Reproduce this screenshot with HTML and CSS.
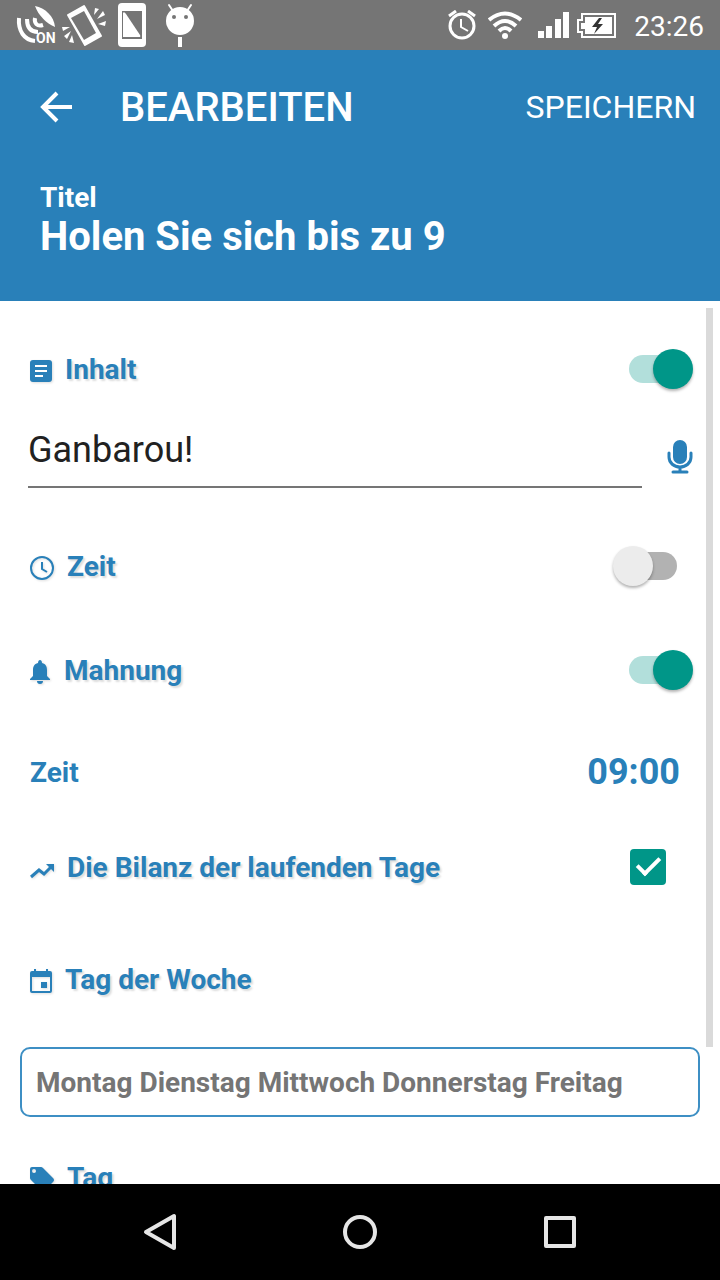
FILE: index.html
```
<!DOCTYPE html>
<html lang="de">

<head>
    <meta charset="UTF-8">
    <meta name="viewport" content="width=device-width, initial-scale=1.0">
    <title>Bearbeiten</title>
    <link rel="stylesheet" href="styles.css">
</head>

<body>
    <div class="status">
        <div class="status-left">
            <svg class="nfc" width="42" height="44" viewBox="0 0 42 44">
                <path d="M19 3C29 5 38 13 39 24C31 21 22 12 19 3Z" fill="#fff"/>
                <g fill="none" stroke="#fff" stroke-width="4">
                    <path d="M3 15C2 28 8 37 19 38"/>
                    <path d="M11 16C11 24 14 29 22 29"/>
                    <path d="M19 15C18 20 21 24 27 22"/>
                </g>
                <text x="20" y="40" class="nfc-text">ON</text>
            </svg>
            <svg width="44" height="44" viewBox="0 0 44 44">
                <path d="M6 12L22 3L39 33L23 42Z" fill="#fff" stroke="#fff" stroke-width="2" stroke-linejoin="round"/>
                <path d="M9 15L22 8L34 30L22 37Z" fill="#757575"/>
                <g fill="#fff">
                    <path d="M32 12L33 5L37 6ZM35 16L41 8L43 12ZM36 21L44 18L43 23ZM8 24L0 24L1 28ZM9 28L2 33L5 36ZM10 32L7 39L12 40Z"/>
                </g>
            </svg>
            <svg width="28" height="44" viewBox="0 0 28 44">
                <rect width="28" height="44" rx="4" fill="#fff"/>
                <rect x="4" y="8" width="20" height="28" fill="#757575"/>
                <path d="M5 10Q6 8 8 11L22 32Q23 34 21 34H5Z" fill="#fff"/>
            </svg>
            <svg width="28" height="44" viewBox="0 0 28 44">
                <path d="M3 2L7 8M25 2L21 8" stroke="#fff" stroke-width="2" stroke-linecap="round"/>
                <circle cx="14" cy="18" r="14" fill="#fff"/>
                <circle cx="8" cy="14" r="2" fill="#757575"/>
                <circle cx="20" cy="14" r="2" fill="#757575"/>
                <path d="M14 34V44" stroke="#fff" stroke-width="4"/>
            </svg>
        </div>
        <div class="status-right">
            <svg width="28" height="30" viewBox="0 0 28 30" fill="none" stroke="#fff">
                <circle cx="14" cy="16" r="12" stroke-width="3"/>
                <path d="M1 6L8 1M27 6L20 1" stroke-width="3"/>
                <path d="M13 9V17L20 21" stroke-width="2"/>
            </svg>
            <svg class="wifi" width="34" height="28" viewBox="0 0 34 28" fill="none" stroke="#fff" stroke-width="4">
                <path d="M1 9Q17 -4 33 9" />
                <path d="M6 15Q17 5 28 15"/>
                <path d="M11 20Q17 14 23 20"/>
                <circle cx="17" cy="25" r="3" fill="#fff" stroke="none"/>
            </svg>
            <svg class="signal" width="31" height="26" viewBox="0 0 31 26" fill="#fff">
                <path d="M0 19H6V26H0ZM8 14H14V26H8ZM17 7H23V26H17ZM25 0H31V26H25Z"/>
            </svg>
            <svg class="battery" width="39" height="25" viewBox="0 0 39 25">
                <path d="M5 1H38V24H5V19H1V7H5Z" fill="none" stroke="#fff" stroke-width="2"/>
                <path d="M8 4H35V21H8V16H4V10H8Z" fill="#fff"/>
                <path d="M22 5L15 14H20L17 21L26 11H21L25 5Z" fill="#333"/>
            </svg>
            <span class="time">23:26</span>
        </div>
    </div>

    <header class="header">
        <div class="bar">
            <button class="back" aria-label="Zurück">
                <svg width="32" height="32" viewBox="0 0 32 32" fill="none" stroke="#fff" stroke-width="4">
                    <path d="M32 16H3M17 2L3 16L17 30"/>
                </svg>
            </button>
            <h1>BEARBEITEN</h1>
            <button class="save">SPEICHERN</button>
        </div>
        <div class="title">
            <label for="title">Titel</label>
            <input type="text" id="title" value="Holen Sie sich bis zu 9">
        </div>
    </header>

    <main class="content">
        <div class="row">
            <svg width="22" height="22" viewBox="0 0 22 22">
                <rect width="22" height="22" rx="3" fill="#2980b9"/>
                <path d="M5 6H17M5 11H17M5 16H13" stroke="#fff" stroke-width="2"/>
            </svg>
            <label for="inhalt">Inhalt</label>
            <input type="checkbox" class="switch" id="inhalt" checked>
        </div>
        <div class="field">
            <input type="text" value="Ganbarou!" aria-label="Inhalt">
            <button class="mic" aria-label="Mikrofon">
                <svg width="26" height="34" viewBox="0 0 26 34">
                    <rect x="6" y="0" width="14" height="24" rx="7" fill="#2980b9"/>
                    <path d="M2 13V17C2 23 7 27 13 27S24 23 24 17V13M13 27V32M6 32H20" fill="none" stroke="#2980b9" stroke-width="3" stroke-linecap="round"/>
                </svg>
            </button>
        </div>
        <div class="row">
            <svg width="24" height="24" viewBox="0 0 24 24" fill="none" stroke="#2980b9" stroke-width="2">
                <circle cx="12" cy="12" r="11"/>
                <path d="M12 6V13L17 16"/>
            </svg>
            <label for="zeit">Zeit</label>
            <input type="checkbox" class="switch" id="zeit">
        </div>
        <div class="row remind">
            <svg width="21" height="24" viewBox="0 0 21 24" fill="#2980b9">
                <path d="M10 0C11 0 12 1 12 3C16 4 17 7 17 10V16L20 19V20H0V19L3 16V10C3 7 4 4 8 3C8 1 9 0 10 0ZM7 21H13C13 23 12 24 10 24S7 23 7 21Z"/>
            </svg>
            <label for="mahnung">Mahnung</label>
            <input type="checkbox" class="switch" id="mahnung" checked>
        </div>
        <div class="row plain">
            <span>Zeit</span>
            <button class="clock">09:00</button>
        </div>
        <div class="row days">
            <svg class="trend" width="24" height="16" viewBox="0 0 24 16" fill="none" stroke="#2980b9" stroke-width="3">
                <path d="M1 14L9 7L14 11L21 4"/>
                <path d="M16 1H24V9Z" fill="#2980b9" stroke="none"/>
            </svg>
            <label for="bilanz">Die Bilanz der laufenden Tage</label>
            <input type="checkbox" class="check" id="bilanz" checked>
        </div>
        <div class="row week">
            <svg width="22" height="24" viewBox="0 0 22 24">
                <path d="M4 0H6V2H16V0H18V2H20Q22 2 22 4V22Q22 24 20 24H2Q0 24 0 22V4Q0 2 2 2H4ZM2 8V22H20V8Z" fill="#2980b9" fill-rule="evenodd"/>
                <rect x="11" y="13" width="6" height="6" fill="#2980b9"/>
            </svg>
            <span>Tag der Woche</span>
        </div>
        <button class="select">Montag Dienstag Mittwoch Donnerstag Freitag</button>
        <div class="row tag">
            <svg width="24" height="24" viewBox="0 0 24 24">
                <path d="M2 0H11Q12 0 13 1L23 11Q25 13 23 15L15 23Q13 25 11 23L1 13Q0 12 0 11V2Q0 0 2 0ZM4 2A2 2 0 1 0 4 6A2 2 0 1 0 4 2Z" fill="#2980b9" fill-rule="evenodd"/>
            </svg>
            <span>Tag</span>
        </div>
        <div class="scroll"></div>
    </main>

    <nav class="nav">
        <button aria-label="Zurück">
            <svg width="40" height="40" viewBox="0 0 40 40">
                <path d="M34 4V36L6 20Z"/>
            </svg>
        </button>
        <button aria-label="Startseite">
            <svg width="40" height="40" viewBox="0 0 40 40">
                <circle cx="20" cy="20" r="15"/>
            </svg>
        </button>
        <button aria-label="Übersicht">
            <svg width="40" height="40" viewBox="0 0 40 40">
                <rect x="6" y="6" width="28" height="28"/>
            </svg>
        </button>
    </nav>
</body>

</html>
```

FILE: styles.css
```
* {
    box-sizing: border-box;
}

body,
h1 {
    margin: 0;
}

body {
    display: flex;
    flex-direction: column;
    height: 100vh;
    font-family: Roboto, sans-serif;
    font-size: 28px;
    background: #fff;
}

button,
input {
    margin: 0;
    padding: 0;
    border: none;
    border-radius: 0;
    outline: none;
    background: none;
    font-family: inherit;
    color: inherit;
}

button {
    cursor: pointer;
}

svg {
    display: block;
    flex: none;
}

/* status bar */
.status {
    display: flex;
    justify-content: space-between;
    flex: none;
    height: 50px;
    padding: 0 16px;
    background: #757575;
    color: #fff;
}

.status-left,
.status-right {
    display: flex;
    align-items: center;
}

.status-left {
    gap: 4px;
}

.status-left svg:nth-child(n+3) {
    margin-left: 8px;
}

.status-left svg:nth-child(4) {
    margin-left: 16px;
}

.nfc-text {
    font-size: 14px;
    font-weight: bold;
    fill: #fff;
}

.wifi {
    margin-left: 12px;
}

.signal {
    margin-left: 16px;
}

.battery {
    margin-left: 8px;
}

.time {
    margin-left: 18px;
    padding-top: 2px;
}

/* header */
.header {
    flex: none;
    padding: 0 24px 43px 40px;
    background: #2980b9;
    color: #fff;
}

.bar {
    display: flex;
    align-items: center;
    height: 114px;
    margin-bottom: 18px;
}

.bar h1 {
    flex: 1;
    margin-left: 48px;
    font-size: 40px;
    font-weight: 500;
}

.save {
    font-size: 32px;
}

.title {
    display: flex;
    flex-direction: column;
    font-weight: bold;
}

.title label {
    line-height: 32px;
}

.title input {
    height: 44px;
    font-size: 40px;
    font-weight: bold;
}

/* form */
.content {
    position: relative;
    flex: 1;
    min-height: 0;
    padding-top: 44px;
    overflow: hidden;
}

.row {
    display: flex;
    align-items: center;
    height: 48px;
    margin-bottom: 56px;
    padding: 0 27px 0 30px;
    font-weight: bold;
    color: #2980b9;
    text-shadow: 2px 2px 2px #ddd;
}

.row svg {
    margin: 4px 13px 0 0;
    filter: drop-shadow(1px 1px 1px #ddd);
}

.row label {
    flex: 1;
}

.row:first-child {
    margin-bottom: 28px;
}

.remind {
    margin-bottom: 54px;
}

.plain {
    justify-content: space-between;
    margin-bottom: 47px;
    padding-right: 40px;
    text-shadow: none;
}

.days {
    margin-bottom: 64px;
    padding-right: 54px;
}

.row .trend {
    margin-top: 8px;
}

.week {
    margin-bottom: 44px;
}

.tag {
    margin-bottom: 0;
}

.clock {
    font-size: 36px;
    font-weight: bold;
}

.field {
    display: flex;
    align-items: center;
    gap: 25px;
    margin-bottom: 54px;
    padding: 0 27px 0 28px;
}

.field input {
    flex: 1;
    min-width: 0;
    height: 67px;
    padding-bottom: 8px;
    border-bottom: 2px solid #757575;
    font-size: 36px;
    color: #212121;
}

.mic {
    padding-top: 4px;
}

.switch {
    position: relative;
    width: 80px;
    height: 40px;
    appearance: none;
}

.switch::before {
    content: "";
    position: absolute;
    top: 6px;
    left: 16px;
    width: 48px;
    height: 28px;
    border-radius: 14px;
    background: #b2b2b2;
}

.switch::after {
    content: "";
    position: absolute;
    top: 0;
    left: 0;
    width: 40px;
    height: 40px;
    border-radius: 50%;
    background: #ececec;
    box-shadow: 0 2px 3px rgba(0, 0, 0, 0.3);
}

.switch:checked::before {
    background: #b2dfdb;
}

.switch:checked::after {
    left: 40px;
    background: #009688;
}

.check {
    position: relative;
    width: 36px;
    height: 36px;
    border-radius: 4px;
    appearance: none;
}

.check:not(:checked) {
    border: 4px solid #757575;
}

.check:checked {
    background: #009688;
}

.check:checked::after {
    content: "";
    position: absolute;
    top: 3px;
    left: 12px;
    width: 9px;
    height: 19px;
    border: solid #fff;
    border-width: 0 4px 4px 0;
    transform: rotate(45deg);
}

.select {
    display: block;
    width: calc(100% - 40px);
    height: 70px;
    margin: 0 20px 36px;
    padding: 0 14px;
    border: 2px solid #3d8fc4;
    border-radius: 10px;
    font-size: 28px;
    font-weight: bold;
    text-align: left;
    color: #757575;
}

.scroll {
    position: absolute;
    top: 7px;
    right: 7px;
    width: 7px;
    height: 739px;
    background: #dadada;
}

/* navigation bar */
.nav {
    display: flex;
    justify-content: center;
    align-items: center;
    gap: 160px;
    flex: none;
    height: 96px;
    background: #000;
}

.nav svg {
    fill: none;
    stroke: #e6e6e6;
    stroke-width: 4;
    stroke-linejoin: round;
}
```
